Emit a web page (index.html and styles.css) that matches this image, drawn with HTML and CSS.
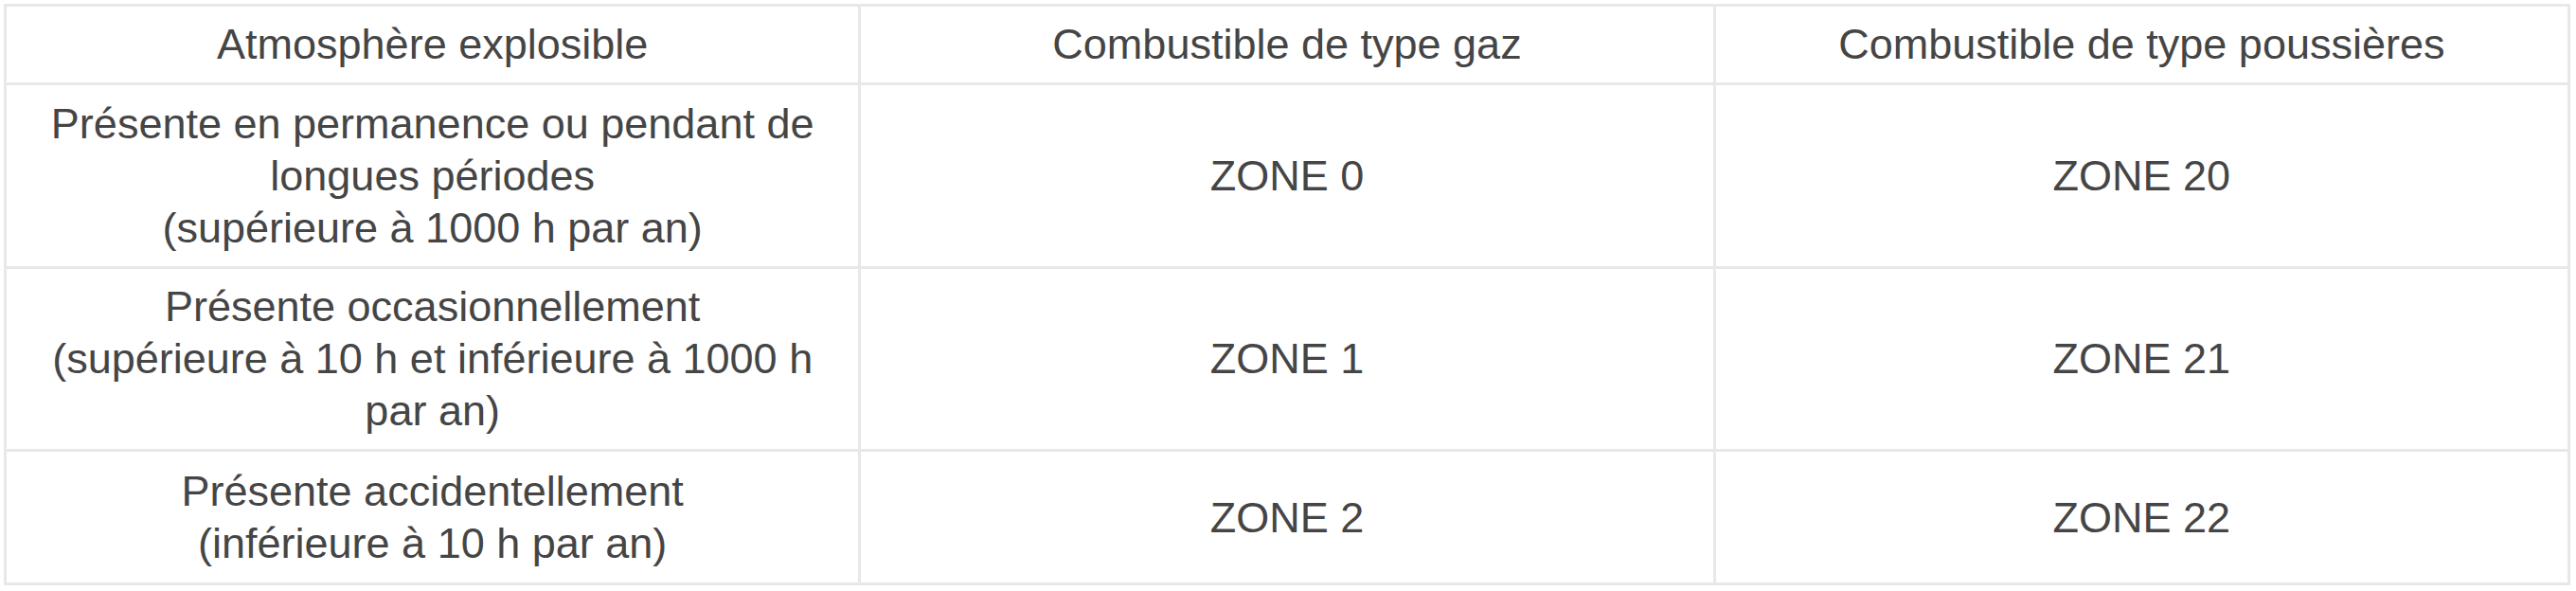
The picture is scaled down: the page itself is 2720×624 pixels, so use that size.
FILE: index.html
```html
<!DOCTYPE html>
<html lang="fr">
<head>
<meta charset="utf-8">
<title>Zones ATEX</title>
<link rel="stylesheet" href="styles.css">
</head>
<body>
<table class="zones">
  <thead>
    <tr class="row-head">
      <th>Atmosphère explosible</th>
      <th>Combustible de type gaz</th>
      <th>Combustible de type poussières</th>
    </tr>
  </thead>
  <tbody>
    <tr class="row-a">
      <td>Présente en permanence ou pendant de longues périodes<br>(supérieure à 1000 h par an)</td>
      <td>ZONE 0</td>
      <td>ZONE 20</td>
    </tr>
    <tr class="row-b">
      <td>Présente occasionnellement<br>(supérieure à 10 h et inférieure à 1000 h par an)</td>
      <td>ZONE 1</td>
      <td>ZONE 21</td>
    </tr>
    <tr class="row-c">
      <td>Présente accidentellement<br>(inférieure à 10 h par an)</td>
      <td>ZONE 2</td>
      <td>ZONE 22</td>
    </tr>
  </tbody>
</table>
</body>
</html>
```
FILE: styles.css
```css
html, body {
  background: #ffffff;
}
body {
  margin: 4px;
  font-family: "Liberation Sans", Arial, Helvetica, sans-serif;
  color: #454545;
}
.zones {
  width: 2710px;
  table-layout: fixed;
  border-collapse: separate;
  border-spacing: 0;
  border-top: 3px solid #e8e8e8;
  border-left: 3px solid #e8e8e8;
}
.zones th,
.zones td {
  font-weight: normal;
  font-size: 45px;
  line-height: 55px;
  text-align: center;
  vertical-align: middle;
  padding: 13px 14px;
  border-right: 3px solid #e8e8e8;
  border-bottom: 3px solid #e8e8e8;
}
.row-head th {
  padding-top: 12px;
  padding-bottom: 13px;
}
.row-b td {
  padding-top: 12px;
  padding-bottom: 13px;
}
.row-c td {
  padding-top: 14px;
  padding-bottom: 14px;
}
```
